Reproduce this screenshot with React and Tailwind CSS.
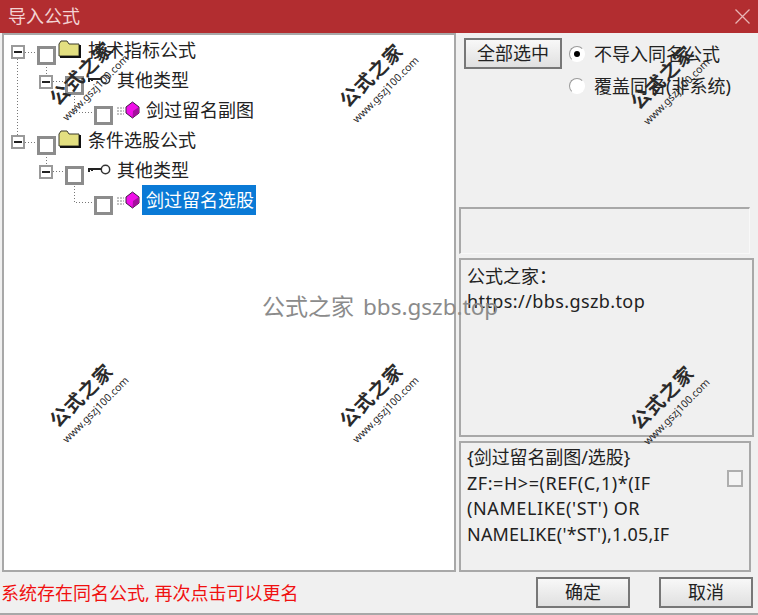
const FONT = '"Noto Sans", "Noto Sans CJK SC", sans-serif';

function Expander() {
  return (
    <span className="mt-[4px] flex h-[14px] w-[14px] shrink-0 items-center justify-center border-2 border-[#9a9a9a] bg-white">
      <span className="h-[2px] w-[8px] bg-[#222]" />
    </span>
  );
}

function Check() {
  return <span className="mt-[10px] block h-[19px] w-[19px] shrink-0 border-[3px] border-[#8c8c8c] bg-white" />;
}

function Folder() {
  return (
    <svg width="23" height="18" viewBox="0 0 23 18" className="mb-[3px] shrink-0">
      <path d="M1 4 L3 1 H9 L11 4 H21 V16 H1 Z" fill="#e3df80" stroke="#3a3a2a" strokeWidth="1" />
      <path d="M22 5 V17 H2" fill="none" stroke="#111" strokeWidth="2" />
    </svg>
  );
}

function KeyIcon() {
  return (
    <svg width="23" height="12" viewBox="0 0 23 12" className="shrink-0">
      <path d="M0 5 H13 M1 5 V8 M4 5 V7" stroke="#222" strokeWidth="2" fill="none" />
      <circle cx="17.5" cy="5.5" r="4.2" fill="white" stroke="#333" strokeWidth="1.5" />
    </svg>
  );
}

function Gem() {
  return (
    <svg width="25" height="18" viewBox="0 0 25 18" className="shrink-0">
      <path d="M1 7 H8 M1 10 H8 M1 13 H8" stroke="#888" strokeWidth="1" strokeDasharray="2 1" />
      <path d="M16.5 1 L23 6 V12 L16.5 17 L10 12 V6 Z" fill="#f010e8" stroke="#3a2040" strokeWidth="1" />
      <path d="M16.5 17 L23 12 V6 L17 10 Z" fill="#a5109e" />
    </svg>
  );
}

function Row({ indent, children }) {
  return <div className={`flex h-[30px] items-center ${indent}`}>{children}</div>;
}

function Label({ children, selected }) {
  return (
    <span
      className={`whitespace-nowrap text-[18px] leading-[30px] ${
        selected ? "bg-[#0a7ad6] pl-[4px] pr-[2px] text-white" : "text-[#222]"
      }`}
    >
      {children}
    </span>
  );
}

function Watermark({ x, y }) {
  return (
    <div
      className="pointer-events-none absolute flex h-[44px] w-[112px] -rotate-45 flex-col items-center justify-center text-[#2a2a2a]"
      style={{ left: x, top: y }}
    >
      <span className="mb-[2px] text-[19px] font-semibold leading-[22px] tracking-[1px]">公式之家</span>
      <span className="text-[10.5px] leading-[14px]">www.gszj100.com</span>
    </div>
  );
}

function Radio({ checked, label }) {
  return (
    <div className="flex h-[32px] items-center">
      <span className="flex h-[16px] w-[16px] shrink-0 items-center justify-center rounded-full border border-[#9a9a9a] border-r-white border-b-white bg-white">
        {checked && <span className="h-[6px] w-[6px] rounded-full bg-black" />}
      </span>
      <span className="ml-[9px] whitespace-nowrap text-[18px] text-[#222]">{label}</span>
    </div>
  );
}

function Btn({ children, className = "" }) {
  return (
    <button className={`flex items-center justify-center border-2 border-[#777] bg-gradient-to-b from-[#f8f8f8] to-[#e0e0e0] text-[18px] text-[#222] ${className}`}>
      {children}
    </button>
  );
}

export default function App() {
  return (
    <div className="relative flex h-[615px] w-[758px] flex-col overflow-hidden bg-[#f0f0f0]" style={{ fontFamily: FONT }}>
      <header className="flex h-[33px] shrink-0 items-center justify-between bg-[#b22d30] pl-[8px] pr-[8px]">
        <span className="text-[18px] text-[#f3d3d3]">导入公式</span>
        <svg width="15" height="15" viewBox="0 0 15 15">
          <path d="M0.5 0.5 L14.5 14.5 M14.5 0.5 L0.5 14.5" stroke="#e8b4b4" strokeWidth="1.3" />
        </svg>
      </header>

      <div className="flex h-[539px] shrink-0 pl-[2px]">
        <section className="relative w-[454px] shrink-0 border-2 border-[#a8a8a8] bg-white">
          <svg className="absolute left-0 top-0" width="200" height="210" fill="none" stroke="#777" strokeWidth="1" strokeDasharray="1 2">
            <path d="M13.5 24 V100 M21 17.5 H33 M21 107.5 H33 M42.5 29 V40 M49 46.5 H61 M70.5 58 V77.5 H90 M42.5 119 V130 M49 136.5 H61 M70.5 148 V167.5 H90" />
          </svg>
          <div className="relative">
            <Row indent="pl-[7px]"><Expander /><span className="w-[12px]" /><Check /><span className="w-[2px]" /><Folder /><span className="w-[7px]" /><Label>技术指标公式</Label></Row>
            <Row indent="pl-[35px]"><Expander /><span className="w-[12px]" /><Check /><span className="w-[4px]" /><KeyIcon /><span className="w-[6px]" /><Label>其他类型</Label></Row>
            <Row indent="pl-[90px]"><Check /><span className="w-[3px]" /><Gem /><span className="w-[5px]" /><Label>剑过留名副图</Label></Row>
            <Row indent="pl-[7px]"><Expander /><span className="w-[12px]" /><Check /><span className="w-[2px]" /><Folder /><span className="w-[7px]" /><Label>条件选股公式</Label></Row>
            <Row indent="pl-[35px]"><Expander /><span className="w-[12px]" /><Check /><span className="w-[4px]" /><KeyIcon /><span className="w-[6px]" /><Label>其他类型</Label></Row>
            <Row indent="pl-[90px]"><Check /><span className="w-[3px]" /><Gem /><span className="w-[1px]" /><Label selected>剑过留名选股</Label></Row>
          </div>
        </section>

        <aside className="flex w-[298px] shrink-0 flex-col pl-[3px]">
          <div className="flex h-[174px] shrink-0 items-start pl-[5px] pt-[5px]">
            <Btn className="h-[31px] w-[98px]">全部选中</Btn>
            <div className="ml-[7px] flex flex-col">
              <Radio checked label="不导入同名公式" />
              <Radio label="覆盖同名(非系统)" />
            </div>
          </div>
          <div className="mr-[4px] h-[47px] shrink-0 border-l-2 border-t-2 border-[#a8a8a8] border-r border-b border-r-[#f8f8f8] border-b-[#f8f8f8]" />
          <div className="mt-[4px] h-[179px] shrink-0 border-2 border-[#a8a8a8] px-[6px] pt-[4px] text-[18px] leading-[25px] text-[#222]">
            <div>公式之家：</div>
            <div className="tracking-[0.4px]">https://bbs.gszb.top</div>
          </div>
          <div className="mr-[3px] mt-[4px] flex h-[131px] shrink-0 border-2 border-[#a8a8a8]">
            <div className="w-[264px] pl-[6px] pt-[2px] text-[18px] leading-[25.5px] text-[#222]">
              <div className="whitespace-nowrap tracking-[-0.1px]">{"{剑过留名副图/选股}"}</div>
              <div className="whitespace-nowrap tracking-[0.55px]">ZF:=H&gt;=(REF(C,1)*(IF</div>
              <div className="whitespace-nowrap tracking-[0.6px]">(NAMELIKE('ST') OR</div>
              <div className="whitespace-nowrap tracking-[0.2px]">NAMELIKE('*ST'),1.05,IF</div>
            </div>
            <span className="ml-[2px] mt-[27px] block h-[17px] w-[16px] border-2 border-[#aeaeae] bg-[#f4f4f4]" />
          </div>
        </aside>
      </div>

      <footer className="flex h-[43px] shrink-0 items-center border-b-2 border-[#a8a8a8] pr-[5px]">
        <span className="flex-1 whitespace-nowrap pl-[1px] pt-[2px] text-[18px] text-[#f01010]">系统存在同名公式, 再次点击可以更名</span>
        <Btn className="mt-[-1px] h-[31px] w-[94px]">确定</Btn>
        <Btn className="ml-[29px] mt-[-1px] h-[31px] w-[94px]">取消</Btn>
      </footer>

      <div className="pointer-events-none absolute left-[262px] top-[290px] whitespace-nowrap text-[23px] leading-[32px] text-[#8b8b8b]">
        公式之家 <span className="ml-[3px] text-[22.5px]">bbs.gszb.top</span>
      </div>

      <Watermark x={31} y={57} />
      <Watermark x={321} y={59} />
      <Watermark x={612} y={61} />
      <Watermark x={31} y={379} />
      <Watermark x={321} y={379} />
      <Watermark x={612} y={381} />
    </div>
  );
}
